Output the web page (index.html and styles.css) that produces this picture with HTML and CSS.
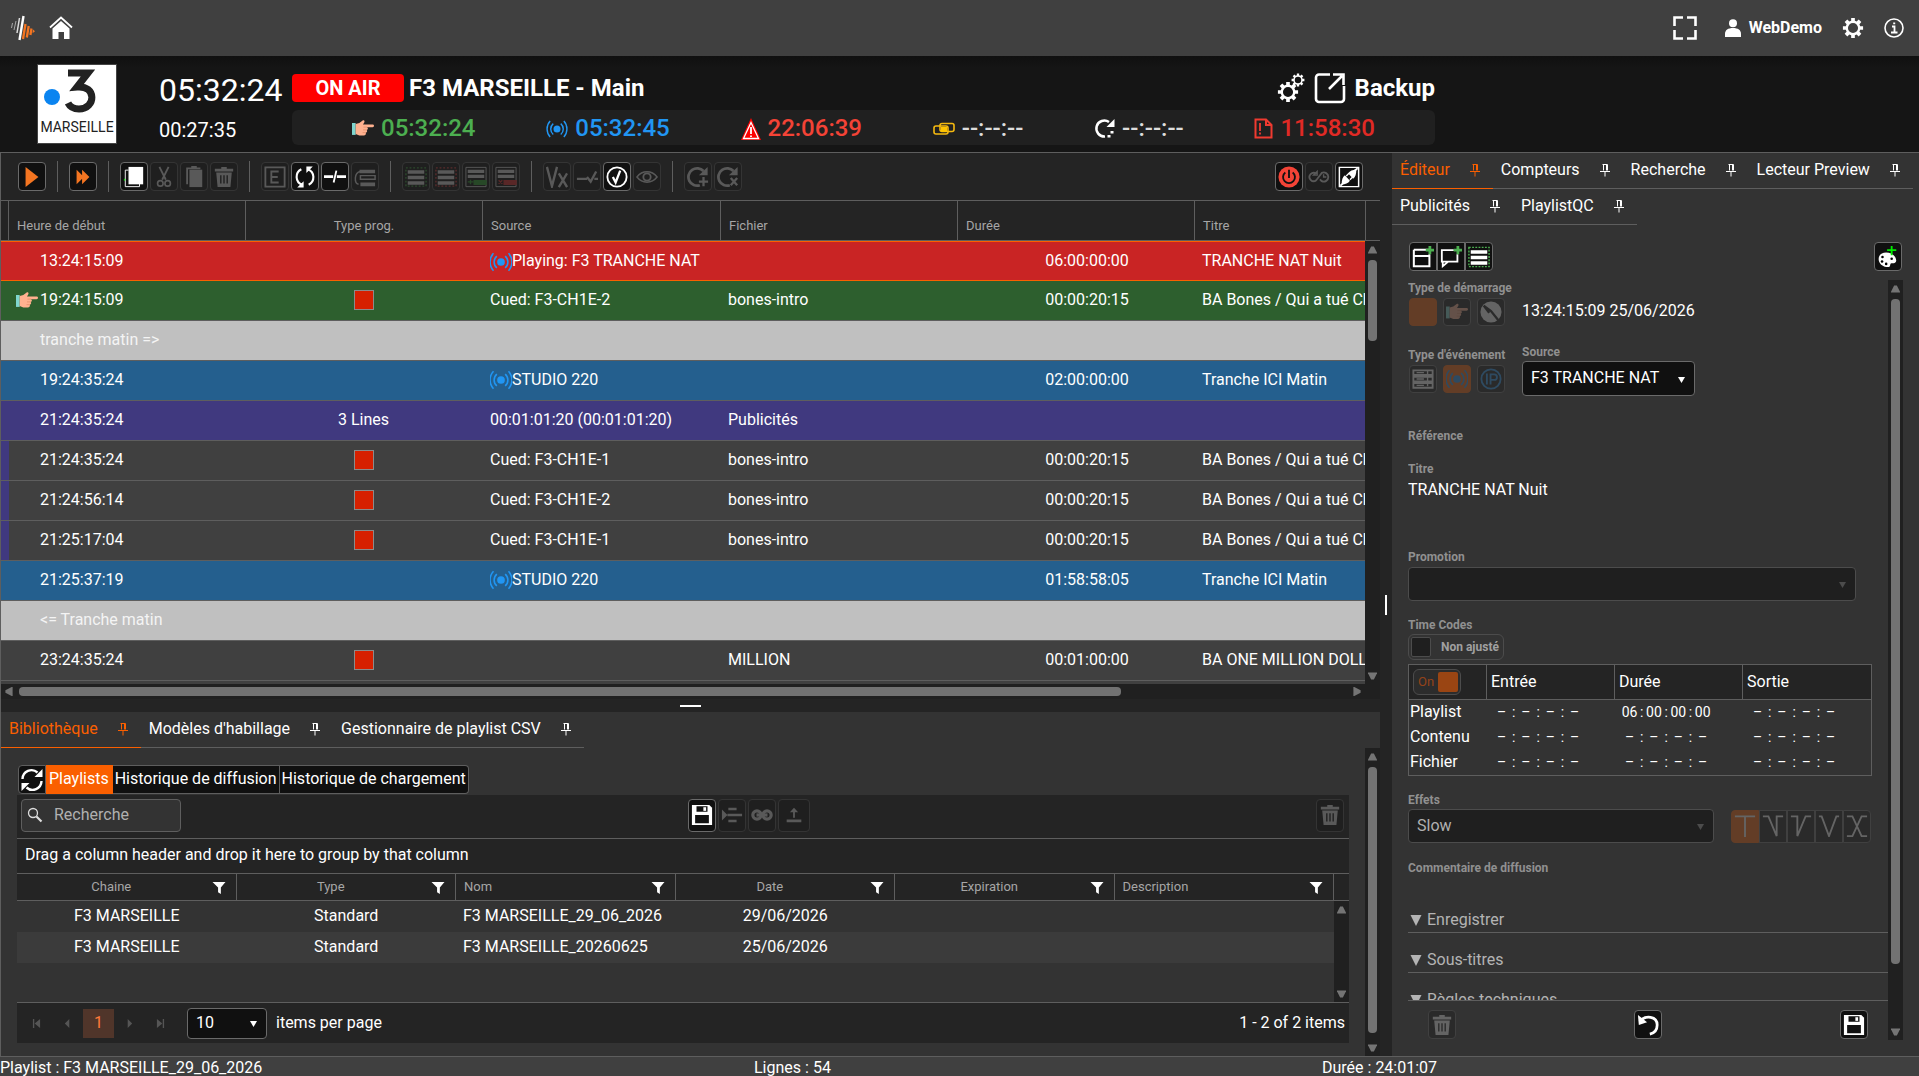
FILE: index.html
```html
<!DOCTYPE html>
<html lang="fr">
<head>
<meta charset="utf-8">
<meta name="viewport" content="width=device-width, initial-scale=1">
<title>F3 MARSEILLE - Main</title>
<link rel="stylesheet" href="styles.css">
</head>
<body>
<svg class="sprite" aria-hidden="true">
  <symbol id="pin" viewBox="0 0 10 14"><path d="M2.500 1.500h5M3.500 1.500v6M6.500 1.500v6M7.500 1.500v6M0 8.500h10M5 8.500v5" fill="none" stroke="currentColor"/></symbol>
  <symbol id="hand" viewBox="0 0 24 18"><path fill="#7fd6cf" d="M0 3h4v13H0z"/><path fill="#ffb18f" d="M4 4l4-1 4-3c2 0 2 1.500 1 3l-1 1.500h10.500c2 0 2 3 0 3H16c2 .5 1.500 3 0 3 1 1 .5 3-1 3 .5 1.500 0 3-2 3H8l-4-1.500z"/><path d="M12.500 7.500h4M12 10.500h4M11.500 13.500h3.500" stroke="#d9855f" stroke-width=".7"/></symbol>
  <symbol id="waves" viewBox="0 0 24 24"><circle cx="12" cy="12" r="4.200" fill="currentColor"/><path d="M7.500 5.500a8.500 8.500 0 0 0 0 13M16.500 5.500a8.500 8.500 0 0 1 0 13M3.800 2.500a14 14 0 0 0 0 19M20.200 2.500a14 14 0 0 1 0 19" fill="none" stroke="currentColor" stroke-width="1.700"/></symbol>
  <symbol id="trash" viewBox="0 0 24 24"><path d="M9 1h6v2h7v3H2V3h7zM3.500 7h17l-1.500 16H5z" fill="currentColor"/><path d="M8.500 10v9M12 10v9M15.500 10v9" stroke="#222" stroke-width="1.600"/></symbol>
  <symbol id="save" viewBox="0 0 24 24"><path d="M1 1h19l3 3v19H1z" fill="currentColor"/><path d="M6 2.500h12v6H6zM4.500 12h15v9h-15z" fill="#111"/><path d="M13.500 3.500h3v4h-3z" fill="currentColor"/></symbol>
  <symbol id="refresh" viewBox="0 0 24 24"><path d="M2.500 11a9 9 0 0 1 15-6.500M21.500 13a9 9 0 0 1-15 6.500" fill="none" stroke="currentColor" stroke-width="2.400"/><path d="M22.500 1v8h-8zM1.500 23v-8h8z" fill="currentColor"/></symbol>
  <symbol id="cycle" viewBox="0 0 24 24"><path d="M9 20.500C1 17.500 1 7 8 3.500M15 3.500c8 3 8 13.500 1 17" fill="none" stroke="currentColor" stroke-width="2.300"/><path d="M3.500 23.500h7v-7zM20.500.5h-7v7z" fill="currentColor"/></symbol>
  <symbol id="rotate" viewBox="0 0 24 24"><path d="M18 5.500A9.500 9.500 0 1 0 14 21" fill="none" stroke="currentColor" stroke-width="3"/><path d="M22.500 1v9H13z" fill="currentColor"/></symbol>
  <symbol id="lines" viewBox="0 0 24 24"><path d="M3 4.500h18v4H3zM3 10.500h18v4H3zM3 16.500h18v4H3z" fill="currentColor"/></symbol>
  <symbol id="gear" viewBox="0 0 24 24"><path fill-rule="evenodd" fill="currentColor" d="M10 1h4v3l2 .8 2.200-2.200 2.900 2.900L19 7.800l.8 2.200H23v4h-3.200L19 16.200l2.100 2.200-2.900 2.900L16 19.200l-2 .8v3h-4v-3l-2-.8-2.200 2.100-2.900-2.900L5 16.200 4.200 14H1v-4h3.200L5 7.800 2.900 5.500l2.900-2.900L8 4.800l2-.8zM12 6.500a5.500 5.500 0 1 0 0 11 5.500 5.500 0 0 0 0-11z"/></symbol>
  <symbol id="funnel" viewBox="0 0 14 14"><path d="M0 1h14L9 7v7l-3-2V7z" fill="currentColor"/></symbol>
  <symbol id="down" viewBox="0 0 10 8"><path d="M1 1h8L5 8z" fill="currentColor"/></symbol>
  <symbol id="tri-up" viewBox="0 0 10 8"><path d="M3.500 0h3L10 7v1H0V7z" fill="currentColor"/></symbol>
  <symbol id="tri-down" viewBox="0 0 10 8"><path d="M3.500 8h3L10 1V0H0v1z" fill="currentColor"/></symbol>
  <symbol id="tri-left" viewBox="0 0 8 10"><path d="M0 3.500v3L7 10h1V0H7z" fill="currentColor"/></symbol>
  <symbol id="tri-right" viewBox="0 0 8 10"><path d="M8 3.500v3L1 10H0V0h1z" fill="currentColor"/></symbol>
</svg>

<header class="topbar">
  <a href="#" class="icon-link" aria-label="Logo"><svg width="24" height="26" viewBox="0 0 24 26"><path d="M1.500 8l-1 5M5 6l-2 9" stroke="#aaa" stroke-width="1" fill="none"/><path d="M8.500 3L6 18" stroke="#ddd" stroke-width="1.500"/><path d="M12.500 1L8.500 25" stroke="#fff" stroke-width="2.400"/><path d="M14.500 9l-2.500 15M17.700 11l-1.900 11.500M20.500 13.500L19.400 20" stroke="#f47521" stroke-width="2.300"/><path d="M22 14.500l2 1.800-2.500 2z" fill="#f47521"/></svg></a>
  <a href="#" class="icon-link" aria-label="Accueil"><svg width="24" height="24" viewBox="0 0 24 24"><path d="M1 11.500L12 1.500l11 10" fill="none" stroke="#fff" stroke-width="1.800"/><path d="M3.500 12.500L12 5l8.500 7.500V23H15v-7H9.500v7h-6z" fill="#fff"/></svg></a>
  <nav class="topbar-right">
    <button class="plain" aria-label="Plein écran"><svg width="26" height="26" viewBox="0 0 26 26"><path d="M11 2.500H2.500V11M15 2.500h8.500V11M11 23.500H2.500V15M15 23.500h8.500V15" fill="none" stroke="#fff" stroke-width="2.600"/></svg></button>
    <a href="#" class="user"><svg width="16" height="18" viewBox="0 0 16 18"><circle cx="8" cy="4.200" r="4" fill="#fff"/><path d="M0 18v-3c0-4 3-6 8-6s8 2 8 6v3z" fill="#fff"/></svg>WebDemo</a>
    <button class="plain" aria-label="Paramètres"><svg width="22" height="22"><use href="#gear"/></svg></button>
    <button class="plain" aria-label="Informations"><svg width="20" height="20" viewBox="0 0 20 20"><circle cx="10" cy="10" r="9" fill="none" stroke="#fff" stroke-width="1.600"/><path d="M8 8.500h2.500V14M7 14.500h6.500M9.200 5.300h2" fill="none" stroke="#fff" stroke-width="1.800"/></svg></button>
  </nav>
</header>

<section class="onair">
  <div class="channel">
    <svg class="channel-mark" width="78" height="54" viewBox="0 0 78 54"><circle cx="14" cy="32" r="8" fill="#0a84f0"/><path d="M30 8h20L39 22c20-2 19 22 2 22-5 0-9-2-11-6" fill="none" stroke="#222" stroke-width="7"/></svg>
    <span>MARSEILLE</span>
  </div>
  <div class="clocks"><time class="clock">05:32:24</time><time class="timer">00:27:35</time></div>
  <div class="status">
    <div class="status-head">
      <span class="badge">ON AIR</span>
      <h1>F3 MARSEILLE - Main</h1>
      <div class="backup">
        <svg width="28" height="30" viewBox="0 0 28 30"><use href="#gear" x="0" y="8" width="22" height="22"/><use href="#gear" x="14" y="0" width="14" height="14"/></svg>
        <svg width="32" height="32" viewBox="0 0 32 32"><path d="M16 2.500H5a3 3 0 0 0-3 3V27a3 3 0 0 0 3 3h22a3 3 0 0 0 3-3V14M15 17L28 4M19 2.500h10.500V13" fill="none" stroke="#fff" stroke-width="2.600"/></svg>
        <strong>Backup</strong>
      </div>
    </div>
    <div class="counters">
      <span class="counter green"><svg width="22" height="17"><use href="#hand"/></svg>05:32:24</span>
      <span class="counter blue"><svg width="22" height="20"><use href="#waves"/></svg>05:32:45</span>
      <span class="counter red"><svg width="20" height="22" viewBox="0 0 20 22"><path d="M10 0l10 22H0z" fill="#f00"/><path d="M10 4.500l7.500 16h-15z" fill="none" stroke="#fff" stroke-width="1.300"/><path d="M10 9v7M10 17.500v1.500" stroke="#fff" stroke-width="1.800"/></svg>22:06:39</span>
      <span class="counter dash"><svg width="22" height="14" viewBox="0 0 22 14"><rect x="1" y="4" width="14" height="8" rx="2" fill="none" stroke="#f5b90f" stroke-width="1.600"/><rect x="7" y="1.500" width="14" height="8" rx="2" fill="none" stroke="#f5b90f" stroke-width="1.600"/><path d="M8 5h6v5H8z" fill="#ffc400"/></svg>--:--:--</span>
      <span class="counter dash"><svg width="21" height="21" viewBox="0 0 21 21"><path d="M15 4a8 8 0 1 0-4 14.500" fill="none" stroke="#fff" stroke-width="2.500"/><path d="M20.500 1v8h-8zM13.500 17h3v2.500h-3zM16.500 13h3v2.500h-3z" fill="#fff"/></svg>--:--:--</span>
      <span class="counter dark-red"><svg width="19" height="21" viewBox="0 0 19 21"><path d="M1.500 1.500H12L17.500 7v12.500h-16zM12 1.500V7h5.500" fill="none" stroke="#f03a30" stroke-width="2"/><path d="M6 5v8M6 14.500v2" stroke="#f03a30" stroke-width="1.800"/></svg>11:58:30</span>
    </div>
  </div>
</section>

<main class="workspace">
  <div class="left">
    <section class="playlist">
      <div class="toolbar">
        <button class="tool orange" aria-label="Lecture"><svg viewBox="0 0 24 24"><path d="M5 1l14 11L5 23z" fill="currentColor"/></svg></button>
        <i class="sep"></i>
        <button class="tool orange" aria-label="Suivant"><svg viewBox="0 0 24 24"><path d="M5 4l8 8-8 8zM11 4l8 8-8 8z" fill="currentColor"/></svg></button>
        <i class="sep"></i>
        <button class="tool" aria-label="Copier"><svg viewBox="0 0 24 24"><path d="M2.500 4.500v18H18" fill="none" stroke="#fff" stroke-width="1"/><path d="M2.500 4.500H6M18 19v3.500" stroke="#fff"/><path d="M6 1h16v19H6z" fill="#fff"/><path d="M1 14h1.500v2H1z" fill="#1d1"/></svg></button>
        <button class="tool" disabled aria-label="Couper"><svg viewBox="0 0 24 24"><path d="M7 1l7 14M17 1l-7 14" stroke="#fff" stroke-width="2"/><circle cx="8" cy="19" r="3" fill="none" stroke="#fff" stroke-width="1.800"/><circle cx="16" cy="19" r="3" fill="none" stroke="#fff" stroke-width="1.800"/></svg></button>
        <button class="tool" disabled aria-label="Coller"><svg viewBox="0 0 24 24"><path d="M7 4h14v19H7z" fill="#fff"/><path d="M4.500 20V2.500H19M9 1h6" fill="none" stroke="#fff" stroke-width="2"/></svg></button>
        <button class="tool" disabled aria-label="Supprimer"><svg><use href="#trash"/></svg></button>
        <i class="sep"></i>
        <button class="tool" disabled aria-label="Éditer"><svg viewBox="0 0 24 24"><path d="M1.500 1.500h21v21h-21zM16 6H8v12h8M8 12h7" fill="none" stroke="#fff" stroke-width="2"/></svg></button>
        <button class="tool" aria-label="Actualiser"><svg><use href="#cycle"/></svg></button>
        <button class="tool" aria-label="Couper la ligne"><svg viewBox="0 0 24 24"><path d="M0 11.500h10M14 11.500h10" stroke="#fff" stroke-width="3"/><path d="M13.500 5l-3 13" stroke="#fff" stroke-width="2"/></svg></button>
        <button class="tool" disabled aria-label="Grouper"><svg viewBox="0 0 24 24"><path d="M6 4h17v4H6zM7 18h16v4H7z" fill="#fff"/><path d="M7 6C0 7 0 19 5 20M7 10.500h16v4H7z" fill="none" stroke="#fff" stroke-width="1.600"/></svg></button>
        <i class="sep"></i>
        <button class="tool" disabled aria-label="Tout sélectionner"><svg viewBox="0 0 24 24"><use href="#lines"/><path d="M1 2h22v20H1z" fill="none" stroke="#4b4" stroke-width="1.500" stroke-dasharray="2 2"/></svg></button>
        <button class="tool" disabled aria-label="Désélectionner"><svg viewBox="0 0 24 24"><use href="#lines"/><path d="M1 2h22v20H1z" fill="none" stroke="#f44" stroke-width="1.500" stroke-dasharray="2 2"/></svg></button>
        <button class="tool" disabled aria-label="Ajouter ligne"><svg viewBox="0 0 24 24"><path d="M1 1.500h22v21H1z" fill="none" stroke="#fff"/><path d="M3 4h18v3.500H3zM3 9.500h18V13H3z" fill="#fff"/><path d="M10 16h13v4H10zM3 17.300h6M6 15v5" stroke="#3b3" fill="#3b3" stroke-width="1.500"/></svg></button>
        <button class="tool" disabled aria-label="Retirer ligne"><svg viewBox="0 0 24 24"><path d="M1 1.500h22v21H1z" fill="none" stroke="#fff"/><path d="M3 4h18v3.500H3zM3 9.500h18V13H3z" fill="#fff"/><path d="M10 16h13v4H10zM4 15.500l4 4M8 15.500l-4 4" stroke="#f33" fill="#f33" stroke-width="1.500"/></svg></button>
        <i class="sep"></i>
        <button class="tool" disabled aria-label="Annuler vérification"><svg viewBox="0 0 24 24"><path d="M1 1l5.500 21L12 1M14 8l9 15M23 8l-9 15" fill="none" stroke="#fff" stroke-width="2.600"/></svg></button>
        <button class="tool" disabled aria-label="Vérifier la ligne"><svg viewBox="0 0 24 24"><path d="M1 14h11M12 12l4 5 6-11M20 14h4" fill="none" stroke="#fff" stroke-width="2.500"/></svg></button>
        <button class="tool" aria-label="Vérifier"><svg viewBox="0 0 24 24"><circle cx="12" cy="12" r="10.500" fill="none" stroke="#fff" stroke-width="2"/><path d="M7.500 12l3 6 5-13" fill="none" stroke="#fff" stroke-width="2.500"/></svg></button>
        <button class="tool" disabled aria-label="Afficher"><svg viewBox="0 0 24 24"><path d="M1 12c6-7.500 16-7.500 22 0-6 7.500-16 7.500-22 0z" fill="none" stroke="#fff" stroke-width="1.600"/><circle cx="12" cy="12" r="4" fill="none" stroke="#fff" stroke-width="2"/></svg></button>
        <i class="sep"></i>
        <button class="tool" disabled aria-label="Ajouter boucle"><svg viewBox="0 0 24 24"><use href="#rotate"/><path d="M13 17h10M18 12v10" stroke="#fff" stroke-width="2.500"/></svg></button>
        <button class="tool" disabled aria-label="Retirer boucle"><svg viewBox="0 0 24 24"><use href="#rotate"/><path d="M15 13l7 8M22 13l-7 8" stroke="#fff" stroke-width="2.500"/></svg></button>
        <div class="push"></div>
        <button class="tool" aria-label="Antenne"><svg viewBox="0 0 24 24"><circle cx="12" cy="12" r="11.500" fill="#f44336"/><path d="M8 7a6.500 6.500 0 1 0 8 0M12 4v9" fill="none" stroke="#111" stroke-width="2"/></svg></button>
        <button class="tool" disabled aria-label="Liaison"><svg viewBox="0 0 24 24"><path d="M9 8.500a4.500 4.500 0 1 0 0 7l6-8a5 5 0 1 1 0 9l-2-2" fill="none" stroke="#fff" stroke-width="2"/><path d="M10 6v4H6zM17 9v3h3" fill="none" stroke="#fff" stroke-width="1.500"/></svg></button>
        <button class="tool" aria-label="Connexion"><svg viewBox="0 0 24 24"><path d="M1.500 1.500h21v21h-21z" fill="none" stroke="#fff" stroke-width="1.600"/><path d="M21.500 2.500l-6 4.500" stroke="#fff" stroke-width="2"/><path d="M2.500 21.500l6-5" stroke="#fff" stroke-width="2"/><path d="M20 4c0 5-1 8-3.500 10L11 8c2-3 5-4 9-4zM4 20c0-5 1-8 3.500-10l5.500 6c-2 3-5 4-9 4z" fill="#fff"/><path d="M9 11l3-3M13 15l3-3" stroke="#fff" stroke-width="1.500"/></svg></button>
      </div>
      <div class="grid-wrap">
        <div class="grid-view">
          <table class="events">
            <colgroup><col class="c-flag"><col class="c-std"><col class="c-std"><col class="c-src"><col class="c-std"><col class="c-std"><col class="c-wide"></colgroup>
            <thead><tr><th></th><th>Heure de début</th><th class="mid">Type prog.</th><th>Source</th><th>Fichier</th><th>Durée</th><th>Titre</th></tr></thead>
            <tbody>
              <tr class="playing"><td></td><td><span class="lead"></span>13:24:15:09</td><td></td><td><svg class="wave"><use href="#waves"/></svg>Playing: F3 TRANCHE NAT</td><td></td><td class="dur">06:00:00:00</td><td>TRANCHE NAT Nuit</td></tr>
              <tr class="cued"><td></td><td><span class="lead"><svg width="22" height="17"><use href="#hand"/></svg></span>19:24:15:09</td><td class="mid"><i class="box"></i></td><td>Cued: F3-CH1E-2</td><td>bones-intro</td><td class="dur">00:00:20:15</td><td>BA Bones / Qui a tué Christopher</td></tr>
              <tr class="note"><td></td><td colspan="6"><span class="lead"></span>tranche matin =&gt;</td></tr>
              <tr class="live"><td></td><td><span class="lead"></span>19:24:35:24</td><td></td><td><svg class="wave"><use href="#waves"/></svg>STUDIO 220</td><td></td><td class="dur">02:00:00:00</td><td>Tranche ICI Matin</td></tr>
              <tr class="block"><td></td><td><span class="lead"></span>21:24:35:24</td><td class="mid">3 Lines</td><td>00:01:01:20 (00:01:01:20)</td><td>Publicités</td><td></td><td></td></tr>
              <tr class="child"><td></td><td><span class="lead"></span>21:24:35:24</td><td class="mid"><i class="box"></i></td><td>Cued: F3-CH1E-1</td><td>bones-intro</td><td class="dur">00:00:20:15</td><td>BA Bones / Qui a tué Christopher</td></tr>
              <tr class="child"><td></td><td><span class="lead"></span>21:24:56:14</td><td class="mid"><i class="box"></i></td><td>Cued: F3-CH1E-2</td><td>bones-intro</td><td class="dur">00:00:20:15</td><td>BA Bones / Qui a tué Christopher</td></tr>
              <tr class="child"><td></td><td><span class="lead"></span>21:25:17:04</td><td class="mid"><i class="box"></i></td><td>Cued: F3-CH1E-1</td><td>bones-intro</td><td class="dur">00:00:20:15</td><td>BA Bones / Qui a tué Christopher</td></tr>
              <tr class="live"><td></td><td><span class="lead"></span>21:25:37:19</td><td></td><td><svg class="wave"><use href="#waves"/></svg>STUDIO 220</td><td></td><td class="dur">01:58:58:05</td><td>Tranche ICI Matin</td></tr>
              <tr class="note"><td></td><td colspan="6"><span class="lead"></span>&lt;= Tranche matin</td></tr>
              <tr><td></td><td><span class="lead"></span>23:24:35:24</td><td class="mid"><i class="box"></i></td><td></td><td>MILLION</td><td class="dur">00:01:00:00</td><td>BA ONE MILLION DOLLARS</td></tr>
              <tr><td></td><td></td><td></td><td></td><td></td><td></td><td></td></tr>
            </tbody>
          </table>
        </div>
        <div class="grid-side">
          <div class="grid-corner"></div>
          <div class="vscroll"><svg><use href="#tri-up"/></svg><div class="track"><div class="thumb" style="height:20%"></div></div><svg><use href="#tri-down"/></svg></div>
        </div>
      </div>
      <div class="hscroll"><svg><use href="#tri-left"/></svg><div class="track"><div class="thumb" style="width:83%"></div></div><svg><use href="#tri-right"/></svg></div>
    </section>

    <div class="split-h"><i></i></div>

    <section class="library">
      <nav class="tabs">
        <a href="#" class="tab active">Bibliothèque<svg><use href="#pin"/></svg></a>
        <a href="#" class="tab">Modèles d'habillage<svg><use href="#pin"/></svg></a>
        <a href="#" class="tab">Gestionnaire de playlist CSV<svg><use href="#pin"/></svg></a>
      </nav>
      <div class="library-body">
        <div class="library-main">
          <div class="btn-group">
            <button class="refresh" aria-label="Actualiser"><svg width="24" height="24"><use href="#refresh"/></svg></button><button class="on">Playlists</button><button>Historique de diffusion</button><button>Historique de chargement</button>
          </div>
          <div class="datagrid">
            <div class="dg-tools">
              <label class="search"><svg width="16" height="16" viewBox="0 0 16 16"><circle cx="6" cy="6" r="4.500" fill="none" stroke="#ddd" stroke-width="1.300"/><path d="M9.500 9.500l5 5" stroke="#ddd" stroke-width="2.200"/></svg><input type="text" placeholder="Recherche" aria-label="Recherche"></label>
              <div class="dg-actions">
                <button class="tool" aria-label="Enregistrer"><svg><use href="#save"/></svg></button>
                <button class="tool" disabled aria-label="Insérer"><svg viewBox="0 0 24 24"><path d="M1 6l6 6-6 6z" fill="#fff"/><path d="M8 5.500h9M7 12h16M8 18.500h9" stroke="#fff" stroke-width="2.600"/></svg></button>
                <button class="tool" disabled aria-label="Lier"><svg viewBox="0 0 24 24"><circle cx="6.500" cy="12" r="4.500" fill="none" stroke="#fff" stroke-width="3.500"/><circle cx="17.500" cy="12" r="4.500" fill="none" stroke="#fff" stroke-width="3.500"/><path d="M6 12h12" stroke="#fff" stroke-width="3.500"/></svg></button>
                <button class="tool wide" disabled aria-label="Exporter"><svg viewBox="0 0 24 24"><path d="M12 15V8" stroke="#fff" stroke-width="2"/><path d="M12 4l4.500 5h-9zM4 17h16v3H4z" fill="#fff"/></svg></button>
              </div>
              <button class="tool" disabled aria-label="Supprimer"><svg><use href="#trash"/></svg></button>
            </div>
            <p class="dg-drop">Drag a column header and drop it here to group by that column</p>
            <div class="dg-body">
              <div class="dg-view">
              <table class="lists">
                <thead><tr>
                  <th class="mid">Chaine<svg><use href="#funnel"/></svg></th><th class="mid">Type<svg><use href="#funnel"/></svg></th><th>Nom<svg><use href="#funnel"/></svg></th><th class="mid">Date<svg><use href="#funnel"/></svg></th><th class="mid">Expiration<svg><use href="#funnel"/></svg></th><th>Description<svg><use href="#funnel"/></svg></th>
                </tr></thead>
                <tbody>
                  <tr><td class="mid">F3 MARSEILLE</td><td class="mid">Standard</td><td>F3 MARSEILLE_29_06_2026</td><td class="mid">29/06/2026</td><td></td><td></td></tr>
                  <tr><td class="mid">F3 MARSEILLE</td><td class="mid">Standard</td><td>F3 MARSEILLE_20260625</td><td class="mid">25/06/2026</td><td></td><td></td></tr>
                </tbody>
              </table>
              </div>
              <div class="dg-side"><div class="dg-corner"></div><div class="vscroll"><svg><use href="#tri-up"/></svg><div class="track"></div><svg><use href="#tri-down"/></svg></div></div>
            </div>
            <div class="pager">
              <button disabled aria-label="Première page"><svg viewBox="0 0 10 10"><path d="M1 0h1.500v10H1zM9 0v10L3 5z" fill="currentColor"/></svg></button>
              <button disabled aria-label="Page précédente"><svg viewBox="0 0 10 10"><path d="M7 0v10L2 5z" fill="currentColor"/></svg></button>
              <button class="page">1</button>
              <button disabled aria-label="Page suivante"><svg viewBox="0 0 10 10"><path d="M3 0v10l5-5z" fill="currentColor"/></svg></button>
              <button disabled aria-label="Dernière page"><svg viewBox="0 0 10 10"><path d="M7.500 0H9v10H7.500zM1 0v10l6-5z" fill="currentColor"/></svg></button>
              <span class="select size"><select id="page-size"><option>10</option></select><svg><use href="#down"/></svg></span>
              <label for="page-size">items per page</label>
              <span class="push">1 - 2 of 2 items</span>
            </div>
          </div>
        </div>
        <div class="vscroll"><svg><use href="#tri-up"/></svg><div class="track"><div class="thumb" style="height:98%"></div></div><svg><use href="#tri-down"/></svg></div>
      </div>
    </section>
  </div>

  <div class="split-v"><i></i></div>

  <aside class="right">
    <nav class="tabs">
      <a href="#" class="tab active">Éditeur<svg><use href="#pin"/></svg></a>
      <a href="#" class="tab">Compteurs<svg><use href="#pin"/></svg></a>
      <a href="#" class="tab">Recherche<svg><use href="#pin"/></svg></a>
      <a href="#" class="tab">Lecteur Preview<svg><use href="#pin"/></svg></a>
      <a href="#" class="tab">Publicités<svg><use href="#pin"/></svg></a>
      <a href="#" class="tab">PlaylistQC<svg><use href="#pin"/></svg></a>
    </nav>
    <div class="editor-tools">
      <div class="joined">
        <button class="tool" aria-label="Nouvel événement"><svg viewBox="0 0 24 24"><path d="M2 4h17M2 4v18h17V9M2 11h17" fill="none" stroke="#fff" stroke-width="2.200"/><path d="M15 4.500h9M19.500 0v9" stroke="#4caf50" stroke-width="3"/></svg></button>
        <button class="tool" aria-label="Nouveau commentaire"><svg viewBox="0 0 24 24"><path d="M15 4.500H2V17h17V9M3 17v5l6-5" fill="none" stroke="#fff" stroke-width="2"/><path d="M15 4.500h9M19.500 0v9" stroke="#4caf50" stroke-width="3"/></svg></button>
        <button class="tool" aria-label="Nouveau bloc"><svg viewBox="0 0 24 24"><use href="#lines"/><path d="M1 1.500h22v21H1z" fill="none" stroke="#4caf50" stroke-width="1.600" stroke-dasharray="2 1.500"/></svg></button>
      </div>
      <button class="tool" aria-label="Palette"><svg viewBox="0 0 24 24"><path d="M10 7c-6 0-9 4-8 9 1 4 5 7 10 7 3 0 2-3 3-4 2-1 5 1 6-3 0-4-4-9-11-9z" fill="#fff"/><circle cx="6" cy="12" r="1.400"/><circle cx="5.500" cy="17" r="1.400"/><circle cx="10" cy="19.500" r="1.400"/><circle cx="16" cy="14" r="1.400"/><path d="M11 4.500h10M16 0v10" stroke="#0e0" stroke-width="2"/></svg></button>
    </div>
    <div class="editor">
      <div class="editor-col">
        <div class="form">
          <div class="pair first">
            <div class="field"><span class="label">Type de démarrage</span>
              <div class="types"><button class="tool selected" disabled aria-label="Automatique"><svg></svg></button><button class="tool" disabled aria-label="Manuel"><svg><use href="#hand"/></svg></button><button class="tool" disabled aria-label="Heure fixe"><svg viewBox="0 0 24 24"><circle cx="12" cy="12" r="11.500" fill="#fff"/><path d="M4 5l8 6 8 10M4 5l6 8" stroke="#111" stroke-width="2.500" fill="none"/></svg></button></div></div>
            <p class="value">13:24:15:09 25/06/2026</p>
          </div>
          <div class="pair second">
            <div class="field"><span class="label">Type d'événement</span>
              <div class="types"><button class="tool" disabled aria-label="Fichier"><svg viewBox="0 0 24 24"><path d="M1.500 2.500h21v5h-21zM1.500 9.500h21v5h-21zM1.500 16.500h21v5h-21z" fill="none" stroke="#fff" stroke-width="2"/><path d="M5 5h8M5 12h8M5 19h8M17 3v17" stroke="#fff" stroke-width="1.500"/></svg></button><button class="tool selected" disabled aria-label="Direct"><svg class="blue-ico"><use href="#waves"/></svg></button><button class="tool" disabled aria-label="IP"><svg class="blue-ico" viewBox="0 0 24 24"><circle cx="12" cy="12" r="10.500" fill="none" stroke="currentColor" stroke-width="2"/><path d="M7.500 6v12M11.500 18V7h4c4 0 4 6 0 6h-4" fill="none" stroke="currentColor" stroke-width="2"/></svg></button></div></div>
            <div class="source"><label class="label" for="source">Source</label>
              <span class="select"><select id="source"><option>F3 TRANCHE NAT</option></select><svg><use href="#down"/></svg></span></div>
          </div>
          <span class="label ref">Référence</span>
          <span class="label title-label">Titre</span>
          <p class="title-value">TRANCHE NAT Nuit</p>
          <label class="label promo-label" for="promo">Promotion</label>
          <span class="select promo"><select id="promo" disabled><option></option></select><svg><use href="#down"/></svg></span>
          <span class="label tc-label">Time Codes</span>
          <label class="check"><input type="checkbox" disabled>Non ajusté</label>
          <table class="timecodes">
            <thead><tr><th><label class="switch">On<input type="checkbox" checked disabled></label></th><th>Entrée</th><th>Durée</th><th>Sortie</th></tr></thead>
            <tbody>
              <tr><th>Playlist</th><td><span class="tc"><b>–</b>:<b>–</b>:<b>–</b>:<b>–</b></span></td><td><span class="tc"><b>06</b>:<b>00</b>:<b>00</b>:<b>00</b></span></td><td><span class="tc"><b>–</b>:<b>–</b>:<b>–</b>:<b>–</b></span></td></tr>
              <tr><th>Contenu</th><td><span class="tc"><b>–</b>:<b>–</b>:<b>–</b>:<b>–</b></span></td><td><span class="tc"><b>–</b>:<b>–</b>:<b>–</b>:<b>–</b></span></td><td><span class="tc"><b>–</b>:<b>–</b>:<b>–</b>:<b>–</b></span></td></tr>
              <tr><th>Fichier</th><td><span class="tc"><b>–</b>:<b>–</b>:<b>–</b>:<b>–</b></span></td><td><span class="tc"><b>–</b>:<b>–</b>:<b>–</b>:<b>–</b></span></td><td><span class="tc"><b>–</b>:<b>–</b>:<b>–</b>:<b>–</b></span></td></tr>
            </tbody>
          </table>
          <label class="label tc-label" for="fx">Effets</label>
          <div class="effects">
            <span class="select"><select id="fx" disabled><option>Slow</option></select><svg><use href="#down"/></svg></span>
            <div class="joined">
              <button class="tool selected" disabled aria-label="Cut"><svg viewBox="0 0 24 24"><path d="M1 1.500h22M12 1.500V24" fill="none" stroke="#fff" stroke-width="2"/></svg></button>
              <button class="tool" disabled aria-label="Fade cut"><svg viewBox="0 0 24 24"><path d="M1 1.500h6L16 23V1.500h7" fill="none" stroke="#fff" stroke-width="2"/></svg></button>
              <button class="tool" disabled aria-label="Cut fade"><svg viewBox="0 0 24 24"><path d="M1 1.500h7V23l9-21.500h6" fill="none" stroke="#fff" stroke-width="2"/></svg></button>
              <button class="tool" disabled aria-label="Fade"><svg viewBox="0 0 24 24"><path d="M1 1.500h3L12 23l8-21.500h3" fill="none" stroke="#fff" stroke-width="2"/></svg></button>
              <button class="tool" disabled aria-label="Mix"><svg viewBox="0 0 24 24"><path d="M1 1.500h6L17 23h6M23 1.500h-6L7 23H1" fill="none" stroke="#fff" stroke-width="2"/></svg></button>
            </div>
          </div>
          <span class="label comment-label">Commentaire de diffusion</span>
          <button class="fold"><svg viewBox="0 0 12 12"><path d="M0 0h12L6 12z" fill="currentColor"/></svg>Enregistrer</button>
          <button class="fold"><svg viewBox="0 0 12 12"><path d="M0 0h12L6 12z" fill="currentColor"/></svg>Sous-titres</button>
          <button class="fold"><svg viewBox="0 0 12 12"><path d="M0 0h12L6 12z" fill="currentColor"/></svg>Règles techniques</button>
        </div>
        <div class="editor-actions">
          <button class="tool" disabled aria-label="Supprimer"><svg><use href="#trash"/></svg></button>
          <button class="tool" aria-label="Annuler"><svg viewBox="0 0 24 24"><path d="M3 8C9 1 22 2 22 12c0 6-4 9-8 10" fill="none" stroke="#fff" stroke-width="3"/><path d="M1 1l1 11 9-3z" fill="#fff"/></svg></button>
          <button class="tool" aria-label="Enregistrer"><svg><use href="#save"/></svg></button>
        </div>
      </div>
      <div class="vscroll"><svg><use href="#tri-up"/></svg><div class="track"><div class="thumb" style="height:92%"></div></div><svg><use href="#tri-down"/></svg></div>
    </div>
  </aside>
</main>

<footer class="statusbar"><span>Playlist : F3 MARSEILLE_29_06_2026</span><span>Lignes : 54</span><span>Durée : 24:01:07</span></footer>
</body>
</html>
```
FILE: styles.css
```css
:root {
  --line: #5e5e5e;
  --dark: #242424;
  --panel: #333;
  --raised: #404040;
  --track: #202020;
  --muted: #a6a6a6;
  --orange: #fa5f00;
}
* { box-sizing: border-box; }
body {
  margin: 0;
  height: 100vh;
  display: flex;
  flex-direction: column;
  background: var(--dark);
  color: #fff;
  font: 16px/20px Roboto, "Liberation Sans", sans-serif;
  overflow: hidden;
}
p, h1 { margin: 0; }
a { color: inherit; text-decoration: none; }
button, input, select { font: inherit; color: inherit; margin: 0; }
svg { display: block; flex: none; }
.sprite { position: absolute; width: 0; height: 0; }
.push { margin-left: auto; }
.mid { text-align: center; }

/* Top bar */
.topbar {
  flex: none;
  display: flex;
  align-items: center;
  gap: 14px;
  height: 56px;
  padding: 0 15px 0 11px;
  background: var(--raised);
}
.topbar-right { margin-left: auto; display: flex; align-items: center; gap: 20px; }
.plain { border: 0; padding: 0; background: none; }
.user { display: flex; align-items: center; gap: 8px; padding-left: 7px; font-weight: 700; }

/* On-air header */
.onair {
  flex: none;
  display: flex;
  height: 97px;
  padding: 8px 0 0 37px;
  background: linear-gradient(#101010, #151515 12px);
  border-bottom: 1px solid var(--line);
}
.channel {
  width: 80px;
  height: 80px;
  border: 1px solid #444;
  background: #fff;
  color: #222;
  text-align: center;
}
.channel-mark { width: 100%; }
.channel span { display: block; font-size: 14px; line-height: 16px; }
.clocks { width: 175px; padding-left: 42px; display: flex; flex-direction: column; }
.clock { font-size: 32px; line-height: 53px; }
.timer { font-size: 20px; line-height: 26px; }
.status { width: 1143px; padding-top: 8px; }
.status-head { display: flex; align-items: center; height: 32px; font-size: 24px; }
.badge {
  width: 112px;
  margin-right: 5px;
  border-radius: 4px;
  background: #f00;
  font-size: 20px;
  font-weight: 700;
  line-height: 28px;
  text-align: center;
}
.status h1 { font-size: 24px; }
.backup { margin-left: auto; display: flex; align-items: center; gap: 9px; }
.counters {
  display: flex;
  justify-content: space-between;
  align-items: center;
  margin-top: 6px;
  padding: 0 60px;
  height: 35px;
  border-radius: 6px;
  background: #202020;
  font-size: 24px;
  font-weight: 500;
}
.counter { display: flex; align-items: center; gap: 7px; color: #fff; }
.counter svg { margin-top: 2px; }
.counter.green { color: #4caf50; }
.counter.blue { color: #2196f3; }
.counter.red { color: #f44336; }
.counter.dark-red { color: #e02a25; }
.counter.dash { color: #ddd; }

/* Workspace */
.workspace { flex: 1; min-height: 0; display: flex; }
.left {
  flex: 1;
  min-width: 0;
  display: flex;
  flex-direction: column;
  border-left: 1px solid var(--line);
}
.playlist { flex: 546 1 0; min-height: 0; display: flex; flex-direction: column; }
.library { flex: 344 1 0; min-height: 0; display: flex; flex-direction: column; background: var(--panel); }
.split-h { flex: none; height: 13px; display: flex; align-items: center; justify-content: center; }
.split-h i { width: 21px; height: 2px; background: #fff; }
.split-v { flex: none; width: 12px; display: flex; align-items: center; justify-content: center; }
.split-v i { width: 2px; height: 20px; background: #fff; }

.toolbar {
  flex: none;
  display: flex;
  align-items: center;
  gap: 2px;
  height: 48px;
  padding: 0 17px;
  border-bottom: 1px solid var(--line);
}
.sep { width: 1px; height: 31px; margin: 0 9px; background: var(--line); }
.tool {
  flex: none;
  display: flex;
  align-items: center;
  justify-content: center;
  width: 28px;
  height: 29px;
  padding: 0;
  border: 1px solid #6a6a6a;
  border-radius: 4px;
  background: #101010;
  color: #fff;
}
.tool svg { width: 22px; height: 22px; }
.tool:disabled { opacity: .24; }
.tool.orange { color: #f47521; }
.tool.selected { background: var(--orange); border-color: var(--orange); }
.blue-ico { color: #2196f3; }

/* Scroll bars */
.vscroll, .hscroll {
  flex: none;
  display: flex;
  align-items: center;
  gap: 6px;
  background: var(--track);
  color: #747474;
}
.vscroll { flex-direction: column; width: 15px; padding: 5px 0 4px; }
.hscroll { height: 15px; padding: 0 19px 0 4px; }
.vscroll svg { width: 9px; height: 8px; }
.hscroll svg { width: 8px; height: 9px; }
.track { flex: 1; min-height: 0; display: flex; }
.vscroll .track { width: 9px; }
.hscroll .track { height: 9px; }
.thumb { width: 9px; height: 9px; border-radius: 4px; background: #727272; }

/* Event grid */
.grid-wrap { flex: 1; min-height: 0; display: flex; }
.grid-view { flex: 1; min-width: 0; overflow: hidden; }
.grid-side { display: flex; flex-direction: column; }
.grid-side .vscroll { flex: 1; }
.grid-corner { height: 40px; border-left: 1px solid var(--line); border-bottom: 1px solid var(--line); }
table { border-collapse: separate; border-spacing: 0; table-layout: fixed; }
th { font-weight: 400; text-align: left; }
.events { width: 1667px; }
.c-flag { width: 8px; }
.c-std { width: 237px; }
.c-src { width: 238px; }
.events th, .events td { height: 40px; padding: 0 7px; white-space: nowrap; border-bottom: 1px solid var(--line); }
.events th { padding: 10px 8px 0; border-right: 1px solid var(--line); color: var(--muted); font-size: 13px; }
.events th.mid { text-align: center; }
.events td { padding-bottom: 2px; background: var(--raised); }
.events td.mid { padding-right: 9px; }
.events th:first-child, .events td:first-child { padding: 0; }
.events .playing td { padding-bottom: 0; background: #c92424; border-top: 1px solid var(--orange); border-bottom-color: var(--orange); }
.events .cued td { background: #2d5f2e; }
.events .note td { background: #c0c0c0; color: #f4f4f4; }
.events .live td { background: #245f8e; }
.events .block td, .events .child td:first-child { background: #40397f; }
.events .dur { padding-left: 28px; text-align: center; }
.lead { display: inline-block; width: 24px; vertical-align: middle; }
.box { display: inline-block; width: 20px; height: 20px; margin: -2px 0; border: 1px solid #8a8a8a; background: #d62000; vertical-align: middle; }
.wave { display: inline-block; width: 22px; height: 22px; margin: -4px 0; vertical-align: middle; color: #2196f3; }

/* Tabs */
.tabs { flex: none; display: flex; flex-wrap: wrap; }
.tab {
  display: flex;
  align-items: center;
  gap: 20px;
  height: 36px;
  padding: 0 13px 2px 8px;
  border-bottom: 1px solid var(--line);
}
.tab svg { width: 10px; height: 14px; }
.tab.active { color: var(--orange); border-color: var(--orange); }

/* Library */
.library-body { flex: 1; min-height: 0; display: flex; }
.library-main { flex: 1; min-width: 0; padding: 17px 16px 13px; display: flex; flex-direction: column; }
.btn-group { display: flex; margin-bottom: 1px; padding-left: 1px; }
.btn-group button { height: 29px; padding: 0 2px 2px; border: 1px solid var(--line); border-left: 0; background: #101010; }
.btn-group button:last-child { border-radius: 0 4px 4px 0; }
.btn-group .refresh { width: 28px; padding: 0 1px; border-left: 1px solid var(--line); border-radius: 4px 0 0 4px; }
.btn-group .on { padding: 0 3px 2px; background: var(--orange); border-color: var(--orange); }
.datagrid { flex: 1; min-height: 0; display: flex; flex-direction: column; background: var(--dark); }
.dg-tools { flex: none; display: flex; align-items: center; justify-content: space-between; height: 44px; padding: 0 5px 3px 4px; border-bottom: 1px solid var(--line); }
.dg-tools .tool { height: 33px; }
.dg-actions { display: flex; gap: 2px; }
.dg-tools .wide { width: 32px; }
.search { display: flex; align-items: center; gap: 11px; width: 160px; height: 33px; padding-left: 5px; border: 1px solid var(--line); border-radius: 4px; background: var(--panel); }
.search input { width: 110px; padding: 0; border: 0; background: none; }
.search input::placeholder { color: #b0b0b0; opacity: 1; }
.dg-drop { flex: none; height: 35px; padding: 6px 8px; border-bottom: 1px solid var(--line); }
.dg-body { flex: 1; min-height: 0; display: flex; background: var(--panel); border-bottom: 1px solid var(--line); }
.dg-view { flex: 1; min-width: 0; }
.lists { width: 100%; }
.lists th { position: relative; height: 27px; padding: 0 30px 0 8px; border-right: 1px solid var(--line); border-bottom: 1px solid var(--line); background: var(--dark); color: var(--muted); font-size: 13px; }
.lists th.mid { padding-left: 0; text-align: center; }
.lists th svg { position: absolute; right: 10px; top: 7px; width: 14px; height: 13px; color: #fff; }
.lists td { height: 31px; padding: 0 7px 2px; white-space: nowrap; }
.lists tbody tr:nth-child(2) { background: #3b3b3b; }
.dg-side { display: flex; flex-direction: column; }
.dg-side .vscroll { flex: 1; }
.dg-corner { height: 27px; border-bottom: 1px solid var(--line); background: var(--dark); }
.pager { flex: none; display: flex; align-items: center; height: 40px; padding: 0 4px 0 4px; }
.pager button { width: 31px; height: 29px; padding: 0; border: 0; background: none; color: #555; display: flex; align-items: center; justify-content: center; }
.pager button svg { width: 9px; height: 9px; }
.pager .page { background: #50352a; color: #ff7b3a; }

.select { position: relative; display: block; }
.select select { width: 100%; height: 100%; padding: 0 8px 1px; border: 1px solid #6a6a6a; border-radius: 4px; background: #101010; appearance: none; }
.select select:disabled { background: #1f1f1f; border-color: #4c4c4c; color: #b0b0b0; opacity: 1; }
.select svg { position: absolute; right: 9px; top: calc(50% - 3px); width: 9px; height: 7px; pointer-events: none; }
.select select:disabled + svg { color: #4c4c4c; }
.size { width: 80px; height: 31px; margin: 0 9px 0 11px; }

/* Right panel */
.right { flex: none; width: 527px; display: flex; flex-direction: column; background: var(--panel); }
.editor-tools { flex: none; display: flex; justify-content: space-between; padding: 17px 17px 9px; }
.joined { display: flex; }
.joined .tool { border-radius: 0; }
.joined .tool:first-child { border-radius: 4px 0 0 4px; }
.joined .tool:last-child { border-radius: 0 4px 4px 0; }
.editor { flex: 1; min-height: 0; display: flex; padding: 0 16px 16px; }
.editor-col { flex: 1; min-width: 0; display: flex; flex-direction: column; }
.form { flex: 1; min-height: 0; overflow: hidden; }
.label { display: block; color: #909090; font-size: 12px; font-weight: 700; line-height: 16px; }
.pair { display: grid; grid-template-columns: 114px 1fr; }
.types { display: flex; gap: 6px; padding: 2px 0 0 1px; }
.types .tool { height: 28px; }
.first .value { padding-top: 21px; }
.second { margin-top: 18px; }
.second .field { padding-top: 3px; }
.source .select { width: 173px; height: 35px; margin-top: 1px; }
.ref { margin-top: 32px; }
.title-label { margin-top: 17px; }
.title-value { margin-top: 3px; }
.promo-label { margin-top: 49px; }
.promo { height: 34px; margin: 2px 32px 0 0; }
.tc-label { margin-top: 16px; }
.check { display: flex; align-items: center; gap: 10px; width: 96px; height: 26px; margin-top: 1px; padding-left: 2px; border: 1px solid #4c4c4c; border-radius: 6px; color: #a0a0a0; font-size: 12px; font-weight: 700; white-space: nowrap; }
.check input { appearance: none; width: 20px; height: 20px; border: 1px solid #4c4c4c; border-radius: 2px; background: #1f1f1f; }
.timecodes { width: calc(100% - 16px); margin-top: 4px; border: 1px solid var(--line); }
.timecodes th, .timecodes td { height: 25px; padding: 0 1px 2px; }
.timecodes thead th { height: 35px; padding: 0 4px; border-right: 1px solid var(--line); border-bottom: 1px solid var(--line); background: var(--dark); }
.timecodes thead th:first-child { width: 78px; }
.timecodes thead th:last-child { border-right: 0; }
.switch { display: flex; align-items: center; justify-content: space-between; width: 48px; height: 26px; padding: 0 2px 0 4px; border: 1px solid #4c4c4c; border-radius: 6px; background: #2c2c2c; color: #944319; font-size: 13px; }
.switch input { appearance: none; width: 20px; height: 20px; border-radius: 2px; background: #9a4513; }
.tc { display: flex; align-items: center; padding-left: 3px; font-size: 14px; }
.tc b { width: 21px; font-weight: 400; text-align: center; }
.effects { display: flex; justify-content: space-between; align-items: center; margin-top: 1px; padding-right: 17px; }
.effects .select { width: 306px; height: 34px; }
.effects .tool { height: 33px; }
.comment-label { margin-top: 17px; margin-bottom: 17px; }
.fold { display: flex; align-items: center; gap: 5px; width: 100%; height: 40px; padding: 15px 0 0 2px; border: 0; border-bottom: 1px solid var(--line); background: none; color: #b4b4b4; text-align: left; }
.fold svg { width: 12px; height: 11px; }
.editor-actions { flex: none; display: flex; justify-content: space-between; padding: 9px 20px 1px; border-top: 1px solid var(--line); }

/* Status bar */
.statusbar { flex: none; display: grid; grid-template-columns: 754fr 568fr 597fr; height: 20px; border-top: 1px solid var(--line); background: var(--raised); line-height: 21px; overflow: hidden; }
```
